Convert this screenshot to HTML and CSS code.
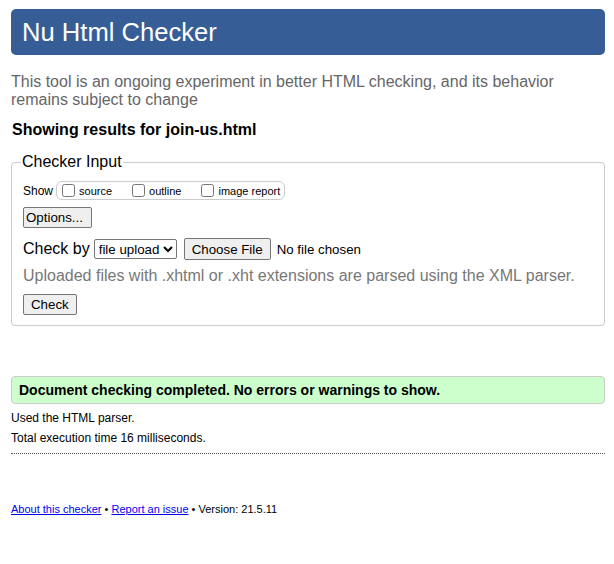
FILE: index.html
```html
<!DOCTYPE html>
<html>
<head>
<meta charset="utf-8">
<title>Nu Html Checker</title>
<link rel="stylesheet" href="styles.css">
</head>
<body>
<div class="page">
  <h1 class="title">Nu Html Checker</h1>
  <p class="intro">This tool is an ongoing experiment in better HTML checking, and its behavior remains subject to change</p>
  <p class="showing">Showing results for join-us.html</p>
  <form class="form">
    <fieldset class="checker">
      <legend class="legend">Checker Input</legend>
      <div class="show-row">
        <span class="show-label">Show</span>
        <fieldset class="show-box">
          <label class="opt"><input type="checkbox" class="cb">source</label>
          <label class="opt"><input type="checkbox" class="cb">outline</label>
          <label class="opt"><input type="checkbox" class="cb">image report</label>
        </fieldset>
      </div>
      <div class="options-row"><button type="button" class="btn options">Options...</button></div>
      <div class="checkby-row">
        <span class="checkby-label">Check by</span>
        <select class="sel"><option>file upload</option></select>
        <span class="file"><button type="button" class="btn choose">Choose File</button><span class="nofile">No file chosen</span></span>
      </div>
      <p class="hint">Uploaded files with .xhtml or .xht extensions are parsed using the XML parser.</p>
      <div class="check-row"><button type="button" class="btn check">Check</button></div>
    </fieldset>
  </form>
  <div class="success">Document checking completed. No errors or warnings to show.</div>
  <p class="stat">Used the HTML parser.</p>
  <p class="stat">Total execution time 16 milliseconds.</p>
  <hr class="rule">
  <p class="footer"><a href="#" class="link">About this checker</a> • <a href="#" class="link">Report an issue</a> • Version: 21.5.11</p>
</div>
</body>
</html>
```
FILE: styles.css
```css
html, body {
  margin: 0;
  padding: 0;
  background: #fff;
}
body {
  font-family: "Liberation Sans", Arial, sans-serif;
  color: #000;
}
.page {
  padding: 9px 9px 0 11px;
}
.title {
  margin: 0;
  height: 46px;
  line-height: 46px;
  padding-left: 11px;
  background: #365d95;
  color: #fff;
  font-size: 25.6px;
  font-weight: normal;
  border-radius: 5px;
}
.intro {
  margin: 18px 0 0 0;
  font-size: 16px;
  line-height: 18px;
  color: #666;
}
.showing {
  margin: 12px 0 0 1px;
  font-size: 16px;
  line-height: 18px;
  font-weight: bold;
}
.form {
  margin: 14px 0 0 0;
}
.checker {
  margin: 0;
  padding: 4px 11px 10px 11px;
  border: 1px solid #ccc;
  border-radius: 4px;
}
.legend {
  font-size: 16px;
  padding: 0 1px;
  margin-left: -2px;
  color: #000;
}
.show-row {
  display: flex;
  align-items: center;
  font-size: 12px;
  margin-top: 6px;
}
.show-label {
  margin-right: 2px;
}
.show-box {
  display: flex;
  align-items: center;
  margin: 0 0 0 1px;
  padding: 0 4px 0 5px;
  height: 17px;
  border: 1px solid #ccc;
  border-radius: 6px;
  min-inline-size: auto;
}
.opt {
  display: flex;
  align-items: center;
  margin-right: 20px;
  font-size: 11px;
}
.opt:last-child {
  margin-right: 0;
}
.cb {
  margin: 0 4px 0 0;
  width: 13px;
  height: 13px;
}
.options-row {
  margin-top: 7px;
}
.btn {
  font-family: "Liberation Sans", Arial, sans-serif;
  background: #efefef;
  border: 1px solid #767676;
  border-radius: 2px;
  color: #000;
  padding: 1px 6px;
}
.options {
  font-size: 13.3px;
  height: 21px;
  padding: 0 8px 0 2px;
}
.checkby-row {
  display: flex;
  align-items: center;
  margin-top: 10px;
  font-size: 16px;
}
.checkby-label {
  margin-right: 4px;
}
.sel {
  font-family: "Liberation Sans", Arial, sans-serif;
  font-size: 13.3px;
  height: 20px;
  border: 1px solid #767676;
  border-radius: 2px;
  margin-right: 7px;
  background: #fff;
  color: #000;
}
.file {
  display: flex;
  align-items: center;
}
.choose {
  font-size: 13.3px;
  height: 22px;
  padding: 0 7px;
}
.nofile {
  font-size: 13.3px;
  margin-left: 6px;
}
.hint {
  margin: 7px 0 0 0;
  font-size: 16px;
  line-height: 18px;
  color: #777;
}
.check-row {
  margin-top: 9px;
}
.check {
  font-size: 13.3px;
  height: 21px;
  padding: 0 7px;
}
.success {
  margin-top: 50px;
  height: 28px;
  box-sizing: border-box;
  line-height: 26px;
  padding-left: 7px;
  background: #ccffcc;
  border: 1px solid #ccc;
  border-radius: 4px;
  font-weight: bold;
  font-size: 14px;
}
.stat {
  margin: 7px 0 0 0;
  font-size: 12px;
  line-height: 14px;
}
.stat + .stat {
  margin-top: 6px;
}
.rule {
  margin: 8px 0 0 0;
  border: 0;
  border-top: 1px dotted #555;
  height: 0;
}
.footer {
  margin: 49px 0 0 0;
  font-size: 11px;
  line-height: 13px;
}
.link {
  color: #00e;
}
```
